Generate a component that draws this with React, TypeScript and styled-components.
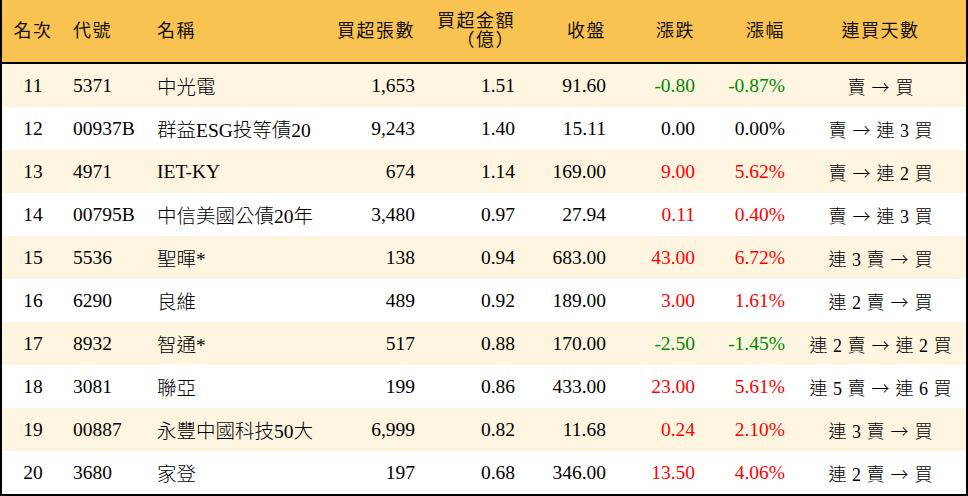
import styled, { createGlobalStyle } from "styled-components";

const GlobalStyle = createGlobalStyle`
  html, body {
    margin: 0;
    padding: 0;
    background: #ffffff;
  }
  body {
    font-family: "Liberation Serif", "Noto Sans CJK TC", serif;
  }
`;

const COLUMNS = "62px 84px 152px 125px 100px 91px 89px 90px 171px";

const Board = styled.div`
  width: 968px;
  height: 496px;
  box-sizing: border-box;
  border-left: 2px solid #000;
  border-right: 2px solid #000;
  border-bottom: 2px solid #000;
  font-family: "Liberation Serif", "Noto Sans CJK TC", serif;
  font-size: 19.5px;
  font-weight: 300;
  color: #000;
`;

const HeaderRow = styled.div`
  display: grid;
  grid-template-columns: ${COLUMNS};
  height: 62px;
  background: #f9c351;
  border-bottom: 2px solid #000;
  align-items: center;
  color: #151008;
`;

const Row = styled.div<{ $shaded: boolean }>`
  display: grid;
  grid-template-columns: ${COLUMNS};
  height: 43px;
  align-items: center;
  background: ${(p) => (p.$shaded ? "#fef5e1" : "#ffffff")};
`;

const Cell = styled.div<{ $align?: "left" | "right" | "center"; $tone?: "up" | "down" }>`
  white-space: nowrap;
  text-align: ${(p) => p.$align || "left"};
  padding: ${(p) =>
    p.$align === "right" ? "0 10px 0 0" : p.$align === "center" ? "0" : "0 0 0 9px"};
  color: ${(p) => (p.$tone === "up" ? "#ff0000" : p.$tone === "down" ? "#008a00" : "inherit")};
`;

const HeadText = styled(Cell)`
  font-size: 18px;
  font-weight: 400;
  line-height: 19px;
  letter-spacing: 1.5px;
`;

const Streak = styled(Cell)`
  font-size: 18px;
  word-spacing: 1px;
`;

const Arrow = styled.span`
  font-family: "Noto Sans CJK TC", sans-serif;
  font-size: 18px;
  margin: 0 6px;
`;

type Stock = {
  rank: number;
  code: string;
  name: string;
  lots: string;
  amount: string;
  close: string;
  change: string;
  pct: string;
  from: string;
  to: string;
};

const rows: Stock[] = [
  { rank: 11, code: "5371", name: "中光電", lots: "1,653", amount: "1.51", close: "91.60", change: "-0.80", pct: "-0.87%", from: "賣", to: "買" },
  { rank: 12, code: "00937B", name: "群益ESG投等債20", lots: "9,243", amount: "1.40", close: "15.11", change: "0.00", pct: "0.00%", from: "賣", to: "連 3 買" },
  { rank: 13, code: "4971", name: "IET-KY", lots: "674", amount: "1.14", close: "169.00", change: "9.00", pct: "5.62%", from: "賣", to: "連 2 買" },
  { rank: 14, code: "00795B", name: "中信美國公債20年", lots: "3,480", amount: "0.97", close: "27.94", change: "0.11", pct: "0.40%", from: "賣", to: "連 3 買" },
  { rank: 15, code: "5536", name: "聖暉*", lots: "138", amount: "0.94", close: "683.00", change: "43.00", pct: "6.72%", from: "連 3 賣", to: "買" },
  { rank: 16, code: "6290", name: "良維", lots: "489", amount: "0.92", close: "189.00", change: "3.00", pct: "1.61%", from: "連 2 賣", to: "買" },
  { rank: 17, code: "8932", name: "智通*", lots: "517", amount: "0.88", close: "170.00", change: "-2.50", pct: "-1.45%", from: "連 2 賣", to: "連 2 買" },
  { rank: 18, code: "3081", name: "聯亞", lots: "199", amount: "0.86", close: "433.00", change: "23.00", pct: "5.61%", from: "連 5 賣", to: "連 6 買" },
  { rank: 19, code: "00887", name: "永豐中國科技50大", lots: "6,999", amount: "0.82", close: "11.68", change: "0.24", pct: "2.10%", from: "連 3 賣", to: "買" },
  { rank: 20, code: "3680", name: "家登", lots: "197", amount: "0.68", close: "346.00", change: "13.50", pct: "4.06%", from: "連 2 賣", to: "買" },
];

const toneOf = (v: string) => (v.startsWith("-") ? "down" : parseFloat(v) > 0 ? "up" : undefined);

export default function App() {
  return (
    <>
      <GlobalStyle />
      <Board>
        <HeaderRow>
          <HeadText $align="center">名次</HeadText>
          <HeadText>代號</HeadText>
          <HeadText>名稱</HeadText>
          <HeadText $align="right">買超張數</HeadText>
          <HeadText $align="right">
            買超金額
            <br />
            （億）
          </HeadText>
          <HeadText $align="right">收盤</HeadText>
          <HeadText $align="right">漲跌</HeadText>
          <HeadText $align="right">漲幅</HeadText>
          <HeadText $align="center">連買天數</HeadText>
        </HeaderRow>
        {rows.map((r, i) => (
          <Row key={r.rank} $shaded={i % 2 === 0}>
            <Cell $align="center">{r.rank}</Cell>
            <Cell>{r.code}</Cell>
            <Cell>{r.name}</Cell>
            <Cell $align="right">{r.lots}</Cell>
            <Cell $align="right">{r.amount}</Cell>
            <Cell $align="right">{r.close}</Cell>
            <Cell $align="right" $tone={toneOf(r.change)}>{r.change}</Cell>
            <Cell $align="right" $tone={toneOf(r.pct)}>{r.pct}</Cell>
            <Streak $align="center">
              {r.from}
              <Arrow>→</Arrow>
              {r.to}
            </Streak>
          </Row>
        ))}
      </Board>
    </>
  );
}
